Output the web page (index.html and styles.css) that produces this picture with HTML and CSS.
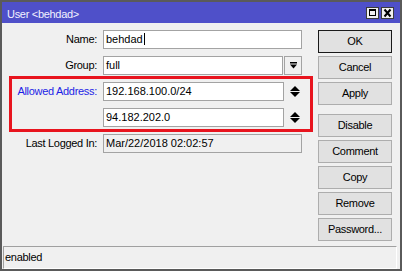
FILE: index.html
```html
<!DOCTYPE html>
<html>
<head>
<meta charset="utf-8">
<link rel="stylesheet" href="styles.css">
</head>
<body>
<div class="window">
  <div class="titlebar">
    <span class="title">User &lt;behdad&gt;</span>
    <div class="tbtns">
      <svg class="tbtn" width="13" height="12" viewBox="0 0 13 12">
        <rect x="0.5" y="0.5" width="12" height="11" fill="#f0f0f0" stroke="#3c3c3c"/>
        <rect x="3.5" y="3.5" width="6" height="5" fill="none" stroke="#000"/>
        <rect x="3" y="2" width="7" height="2" fill="#000"/>
      </svg>
      <svg class="tbtn" width="13" height="12" viewBox="0 0 13 12">
        <rect x="0.5" y="0.5" width="12" height="11" fill="#f0f0f0" stroke="#3c3c3c"/>
        <path d="M3.5 2.5 L9.5 9.5 M9.5 2.5 L3.5 9.5" stroke="#000" stroke-width="2" fill="none"/>
      </svg>
    </div>
  </div>
  <div class="body">
    <div class="form">
      <div class="lbl">Name:</div>
      <div class="field"><div class="input">behdad<span class="caret"></span></div></div>

      <div class="lbl">Group:</div>
      <div class="field">
        <div class="input">full</div>
        <div class="drop">
          <svg width="7" height="7" viewBox="0 0 7 7"><rect x="0" y="0" width="7" height="1.5" fill="#000"/><polygon points="0,2.5 7,2.5 3.5,6.5" fill="#000"/></svg>
        </div>
      </div>

      <div class="lbl blue">Allowed Address:</div>
      <div class="field">
        <div class="input addr">192.168.100.0/24</div>
        <div class="spin">
          <svg width="10" height="11" viewBox="0 0 10 11"><polygon points="5,0 10,5 0,5" fill="#000"/><polygon points="0,6 10,6 5,11" fill="#000"/></svg>
        </div>
      </div>

      <div class="lbl"></div>
      <div class="field">
        <div class="input addr">94.182.202.0</div>
        <div class="spin">
          <svg width="10" height="11" viewBox="0 0 10 11"><polygon points="5,0 10,5 0,5" fill="#000"/><polygon points="0,6 10,6 5,11" fill="#000"/></svg>
        </div>
      </div>

      <div class="lbl">Last Logged In:</div>
      <div class="field"><div class="input ro">Mar/22/2018 02:02:57</div></div>
    </div>
    <div class="buttons">
      <div class="btn default">OK</div>
      <div class="btn">Cancel</div>
      <div class="btn">Apply</div>
      <div class="btn sep">Disable</div>
      <div class="btn">Comment</div>
      <div class="btn">Copy</div>
      <div class="btn">Remove</div>
      <div class="btn">Password...</div>
    </div>
  </div>
  <div class="status">enabled</div>
  <div class="highlight"></div>
</div>
</body>
</html>
```
FILE: styles.css
```css
html, body {
  margin: 0;
  padding: 0;
  background: #f0f0f0;
}
.window {
  position: relative;
  box-sizing: border-box;
  width: 402px;
  height: 271px;
  border: 2px solid #5a5a5a;
  background: #f0f0f0;
  display: flex;
  flex-direction: column;
  font-family: "Liberation Sans", Arial, sans-serif;
  font-size: 11px;
  color: #000;
  letter-spacing: -0.3px;
}
.titlebar {
  height: 21px;
  flex: none;
  background: #4f50c9;
  display: flex;
  justify-content: space-between;
  align-items: flex-start;
  padding: 0 6px 0 5px;
}
.title {
  color: #f2f2ff;
  line-height: 21px;
  padding-top: 2px;
}
.tbtns {
  display: flex;
  gap: 2px;
  margin-top: 5px;
}
.tbtn {
  display: block;
}
.body {
  flex: 1;
  display: flex;
  gap: 16px;
  padding-top: 7px;
}
.form {
  display: grid;
  grid-template-columns: 95px 199px;
  grid-auto-rows: 19px;
  column-gap: 6px;
  row-gap: 7px;
}
.lbl {
  text-align: right;
  line-height: 19px;
  white-space: nowrap;
}
.lbl.blue {
  color: #1e1ee6;
}
.field {
  display: flex;
  gap: 1px;
}
.input {
  flex: 1;
  box-sizing: border-box;
  height: 19px;
  border: 1px solid #a3a3a3;
  background: #fff;
  padding-left: 2px;
  line-height: 17px;
  letter-spacing: 0;
  white-space: nowrap;
}
.input.addr {
  flex: none;
  width: 181px;
}
.input.ro {
  background: #f0f0f0;
}
.caret {
  display: inline-block;
  width: 1px;
  height: 12px;
  background: #000;
  vertical-align: -2px;
  margin-left: 1px;
}
.drop {
  box-sizing: border-box;
  width: 18px;
  height: 19px;
  border: 1px solid #a3a3a3;
  background: #f0f0f0;
  display: flex;
  align-items: center;
  justify-content: center;
}
.spin {
  flex: 1;
  display: flex;
  align-items: center;
  justify-content: center;
  padding-left: 2px;
}
.buttons {
  width: 74px;
  display: flex;
  flex-direction: column;
  gap: 3px;
}
.btn {
  box-sizing: border-box;
  height: 23px;
  border: 1px solid #adadad;
  background: #e1e1e1;
  text-align: center;
  line-height: 21px;
}
.btn.default {
  border-color: #1a1a1a;
}
.btn.sep {
  margin-top: 6px;
}
.status {
  flex: none;
  box-sizing: border-box;
  height: 23px;
  margin: 0 3px 0 1px;
  border-top: 1px solid #a0a0a0;
  border-left: 1px solid #a0a0a0;
  border-bottom: 1px solid #fff;
  border-right: 1px solid #fff;
  padding-left: 1px;
  line-height: 21px;
}
.highlight {
  position: absolute;
  left: 7px;
  top: 74px;
  width: 304px;
  height: 56px;
  box-sizing: border-box;
  border: 3px solid #e8141e;
}
```
